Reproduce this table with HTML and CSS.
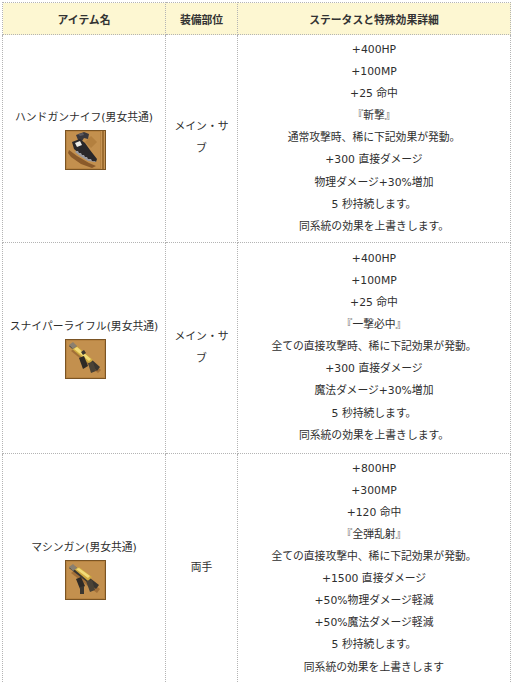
FILE: index.html
```html
<!DOCTYPE html>
<html lang="ja">
<head>
<meta charset="utf-8">
<title>アイテム</title>
<link rel="stylesheet" href="styles.css">
</head>
<body>
<div class="wrap">
<table class="items">
  <colgroup>
    <col class="c-name">
    <col class="c-slot">
    <col class="c-detail">
  </colgroup>
  <thead>
    <tr>
      <th>アイテム名</th>
      <th>装備部位</th>
      <th>ステータスと特殊効果詳細</th>
    </tr>
  </thead>
  <tbody>
    <tr>
      <td class="name">
        <div class="label">ハンドガンナイフ(男女共通)</div>
        <svg class="icon" viewBox="0 0 41 40" width="41" height="40">
          <rect x="0" y="0" width="41" height="40" fill="#7a5424"/>
          <rect x="1" y="1" width="35" height="38" fill="#b88442"/>
          <rect x="2" y="2" width="33" height="36" fill="#c3904e"/>
          <path d="M26 6 L32 12 L26 18 L20 12 Z" fill="#a87636" opacity="0.6"/>
          <rect x="36" y="1" width="4" height="38" fill="#c89656"/>
          <rect x="37" y="1" width="2" height="38" fill="#9c6c30"/>
          <path d="M4 20 L12 26 L24 33 L31 36 L27 38 L16 34 L6 27 L3 23 Z" fill="#8a5a2a"/>
          <path d="M11 5 L19 2 L24 4 L23 9 L19 8 L17 11 L13 10 Z" fill="#3a383c"/>
          <path d="M7 12 L15 9 L20 13 L25 20 L32 29 L31 32 L23 30 L15 24 L9 19 Z" fill="#2a282a"/>
          <path d="M10 13 L15 11 L17 15 L12 17 Z" fill="#ecebe6"/>
          <path d="M11 21 L13 21 L14 23 L16 23 L17 25 L19 25 L20 27 L22 27 L23 29 L26 29 L27 31 L30 31 L31 32 L23 31 L15 26 L10 22 Z" fill="#9a9aa0"/>
          <path d="M13 4 L18 3 L19 5 L15 6 Z" fill="#5a5860"/>
        </svg>
      </td>
      <td class="slot">メイン・サ<br>ブ</td>
      <td class="detail">
        <div>+400HP</div>
        <div>+100MP</div>
        <div>+25 命中</div>
        <div>『斬撃』</div>
        <div>通常攻撃時、稀に下記効果が発動。</div>
        <div>+300 直接ダメージ</div>
        <div>物理ダメージ+30%増加</div>
        <div>5 秒持続します。</div>
        <div>同系統の効果を上書きします。</div>
      </td>
    </tr>
    <tr class="r2">
      <td class="name">
        <div class="label">スナイパーライフル(男女共通)</div>
        <svg class="icon" viewBox="0 0 41 40" width="41" height="40">
          <rect x="0" y="0" width="41" height="40" fill="#7a5424"/>
          <rect x="1" y="1" width="39" height="38" fill="#b88442"/>
          <rect x="2" y="2" width="37" height="36" fill="#c3904e"/>
          <path d="M6 12 L10 9 L36 31 L33 34 Z" fill="#8a5a2a" opacity="0.6"/>
          <path d="M4 7 L8 4 L35 28 L32 32 Z" fill="#3a3630"/>
          <path d="M7 10 L12 7 L28 21 L24 25 Z" fill="#d0aa40"/>
          <path d="M9 10 L12 8 L26 20 L24 22 Z" fill="#f2dc78"/>
          <path d="M14 19 L19 17 L23 27 L18 30 Z" fill="#2e2a26"/>
          <path d="M23 24 L28 23 L31 32 L26 34 Z" fill="#4a4236"/>
          <path d="M4 6 L8 3 L12 7 L8 10 Z" fill="#8a8070"/>
          <path d="M16 13 L19 11 L21 14 L18 16 Z" fill="#3a3630"/>
        </svg>
      </td>
      <td class="slot">メイン・サ<br>ブ</td>
      <td class="detail">
        <div>+400HP</div>
        <div>+100MP</div>
        <div>+25 命中</div>
        <div>『一撃必中』</div>
        <div>全ての直接攻撃時、稀に下記効果が発動。</div>
        <div>+300 直接ダメージ</div>
        <div>魔法ダメージ+30%増加</div>
        <div>5 秒持続します。</div>
        <div>同系統の効果を上書きします。</div>
      </td>
    </tr>
    <tr>
      <td class="name">
        <div class="label">マシンガン(男女共通)</div>
        <svg class="icon" viewBox="0 0 41 40" width="41" height="40">
          <rect x="0" y="0" width="41" height="40" fill="#7a5424"/>
          <rect x="1" y="1" width="39" height="38" fill="#b88442"/>
          <rect x="2" y="2" width="37" height="36" fill="#c3904e"/>
          <path d="M6 13 L10 10 L35 29 L32 33 Z" fill="#8a5a2a" opacity="0.6"/>
          <path d="M4 8 L8 5 L34 25 L31 29 Z" fill="#3a3630"/>
          <path d="M9 9 L14 7 L27 17 L23 21 Z" fill="#d0aa40"/>
          <path d="M11 9 L14 8 L25 16 L23 18 Z" fill="#f2dc78"/>
          <path d="M11 19 L16 17 L20 26 L15 29 Z" fill="#2e2a26"/>
          <path d="M21 21 L27 20 L30 30 L25 32 Z" fill="#4a4236"/>
          <path d="M15 27 L19 26 L19 34 L15 34 Z" fill="#3a3630"/>
          <path d="M4 7 L8 4 L12 8 L8 11 Z" fill="#8a8070"/>
        </svg>
      </td>
      <td class="slot">両手</td>
      <td class="detail">
        <div>+800HP</div>
        <div>+300MP</div>
        <div>+120 命中</div>
        <div>『全弾乱射』</div>
        <div>全ての直接攻撃中、稀に下記効果が発動。</div>
        <div>+1500 直接ダメージ</div>
        <div>+50%物理ダメージ軽減</div>
        <div>+50%魔法ダメージ軽減</div>
        <div>5 秒持続します。</div>
        <div>同系統の効果を上書きします</div>
      </td>
    </tr>
  </tbody>
</table>
</div>
</body>
</html>
```
FILE: styles.css
```css
html, body {
  margin: 0;
  padding: 0;
  background: #ffffff;
}
.wrap {
  padding: 2px 2px 0 2px;
}
.items {
  width: 508px;
  border-collapse: collapse;
  table-layout: fixed;
  font-family: "DejaVu Sans", "Noto Sans CJK JP", sans-serif;
  font-size: 10.8px;
  color: #2e2e2e;
  border: 1px dotted #a8a8a8;
}
.c-name { width: 163px; }
.c-slot { width: 72px; }
.c-detail { width: 273px; }
.items th,
.items td {
  border: 1px dotted #b4b4b4;
  text-align: center;
  vertical-align: middle;
  padding: 0;
}
.items th {
  background: #fdf7d2;
  height: 31px;
  font-weight: bold;
  color: #333333;
}
.items .detail {
  padding: 4px 0;
}
.detail div {
  line-height: 22.1px;
  white-space: nowrap;
}
.items .r2 .detail {
  padding: 5px 0 6px;
}
.slot {
  line-height: 22px;
}
.label {
  line-height: 22px;
  white-space: nowrap;
}
.icon {
  display: block;
  margin: 1px auto 0;
  position: relative;
  left: 1px;
}
```
